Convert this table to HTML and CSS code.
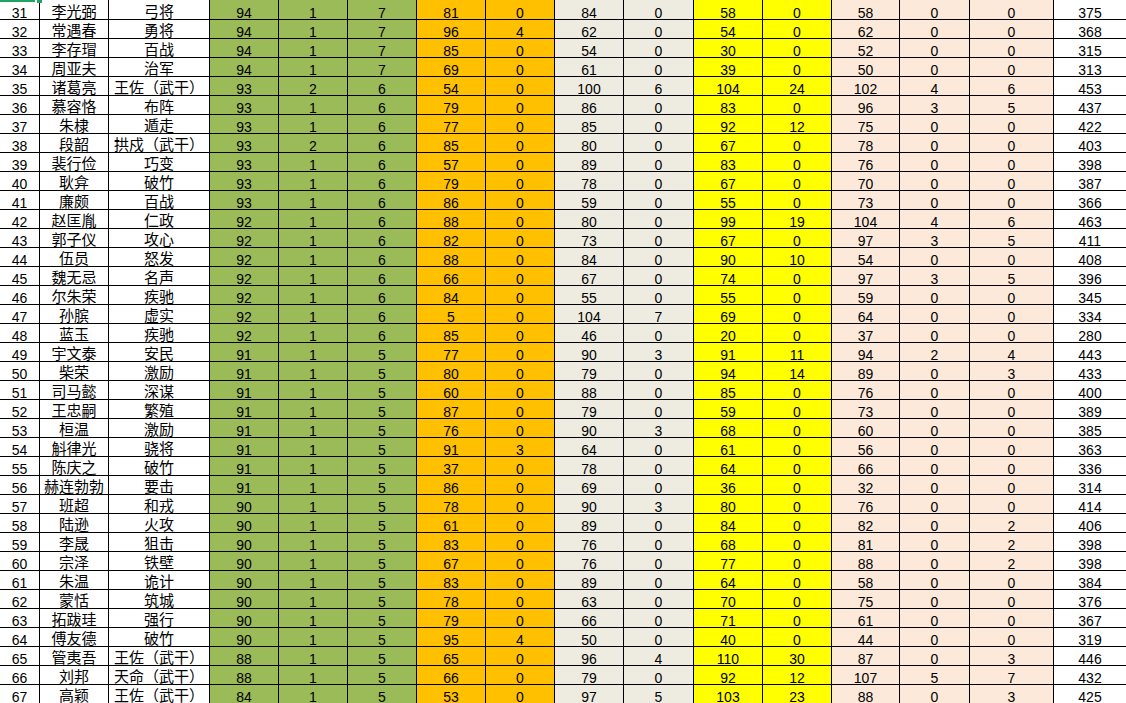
FILE: index.html
```html
<!DOCTYPE html>
<html lang="zh">
<head>
<meta charset="utf-8">
<title>武将</title>
<link rel="stylesheet" href="styles.css">
</head>
<body>
<div class="sheet">
<div class="row"><span>31</span><span>李光弼</span><span>弓将</span><span>94</span><span>1</span><span>7</span><span>81</span><span>0</span><span>84</span><span>0</span><span>58</span><span>0</span><span>58</span><span>0</span><span>0</span><span>375</span></div>
<div class="row"><span>32</span><span>常遇春</span><span>勇将</span><span>94</span><span>1</span><span>7</span><span>96</span><span>4</span><span>62</span><span>0</span><span>54</span><span>0</span><span>62</span><span>0</span><span>0</span><span>368</span></div>
<div class="row"><span>33</span><span>李存瑁</span><span>百战</span><span>94</span><span>1</span><span>7</span><span>85</span><span>0</span><span>54</span><span>0</span><span>30</span><span>0</span><span>52</span><span>0</span><span>0</span><span>315</span></div>
<div class="row"><span>34</span><span>周亚夫</span><span>治军</span><span>94</span><span>1</span><span>7</span><span>69</span><span>0</span><span>61</span><span>0</span><span>39</span><span>0</span><span>50</span><span>0</span><span>0</span><span>313</span></div>
<div class="row"><span>35</span><span>诸葛亮</span><span>王佐（武干）</span><span>93</span><span>2</span><span>6</span><span>54</span><span>0</span><span>100</span><span>6</span><span>104</span><span>24</span><span>102</span><span>4</span><span>6</span><span>453</span></div>
<div class="row"><span>36</span><span>慕容恪</span><span>布阵</span><span>93</span><span>1</span><span>6</span><span>79</span><span>0</span><span>86</span><span>0</span><span>83</span><span>0</span><span>96</span><span>3</span><span>5</span><span>437</span></div>
<div class="row"><span>37</span><span>朱棣</span><span>遁走</span><span>93</span><span>1</span><span>6</span><span>77</span><span>0</span><span>85</span><span>0</span><span>92</span><span>12</span><span>75</span><span>0</span><span>0</span><span>422</span></div>
<div class="row"><span>38</span><span>段韶</span><span>拱戍（武干）</span><span>93</span><span>2</span><span>6</span><span>85</span><span>0</span><span>80</span><span>0</span><span>67</span><span>0</span><span>78</span><span>0</span><span>0</span><span>403</span></div>
<div class="row"><span>39</span><span>裴行俭</span><span>巧变</span><span>93</span><span>1</span><span>6</span><span>57</span><span>0</span><span>89</span><span>0</span><span>83</span><span>0</span><span>76</span><span>0</span><span>0</span><span>398</span></div>
<div class="row"><span>40</span><span>耿弇</span><span>破竹</span><span>93</span><span>1</span><span>6</span><span>79</span><span>0</span><span>78</span><span>0</span><span>67</span><span>0</span><span>70</span><span>0</span><span>0</span><span>387</span></div>
<div class="row"><span>41</span><span>廉颇</span><span>百战</span><span>93</span><span>1</span><span>6</span><span>86</span><span>0</span><span>59</span><span>0</span><span>55</span><span>0</span><span>73</span><span>0</span><span>0</span><span>366</span></div>
<div class="row"><span>42</span><span>赵匡胤</span><span>仁政</span><span>92</span><span>1</span><span>6</span><span>88</span><span>0</span><span>80</span><span>0</span><span>99</span><span>19</span><span>104</span><span>4</span><span>6</span><span>463</span></div>
<div class="row"><span>43</span><span>郭子仪</span><span>攻心</span><span>92</span><span>1</span><span>6</span><span>82</span><span>0</span><span>73</span><span>0</span><span>67</span><span>0</span><span>97</span><span>3</span><span>5</span><span>411</span></div>
<div class="row"><span>44</span><span>伍员</span><span>怒发</span><span>92</span><span>1</span><span>6</span><span>88</span><span>0</span><span>84</span><span>0</span><span>90</span><span>10</span><span>54</span><span>0</span><span>0</span><span>408</span></div>
<div class="row"><span>45</span><span>魏无忌</span><span>名声</span><span>92</span><span>1</span><span>6</span><span>66</span><span>0</span><span>67</span><span>0</span><span>74</span><span>0</span><span>97</span><span>3</span><span>5</span><span>396</span></div>
<div class="row"><span>46</span><span>尔朱荣</span><span>疾驰</span><span>92</span><span>1</span><span>6</span><span>84</span><span>0</span><span>55</span><span>0</span><span>55</span><span>0</span><span>59</span><span>0</span><span>0</span><span>345</span></div>
<div class="row"><span>47</span><span>孙膑</span><span>虚实</span><span>92</span><span>1</span><span>6</span><span>5</span><span>0</span><span>104</span><span>7</span><span>69</span><span>0</span><span>64</span><span>0</span><span>0</span><span>334</span></div>
<div class="row"><span>48</span><span>蓝玉</span><span>疾驰</span><span>92</span><span>1</span><span>6</span><span>85</span><span>0</span><span>46</span><span>0</span><span>20</span><span>0</span><span>37</span><span>0</span><span>0</span><span>280</span></div>
<div class="row"><span>49</span><span>宇文泰</span><span>安民</span><span>91</span><span>1</span><span>5</span><span>77</span><span>0</span><span>90</span><span>3</span><span>91</span><span>11</span><span>94</span><span>2</span><span>4</span><span>443</span></div>
<div class="row"><span>50</span><span>柴荣</span><span>激励</span><span>91</span><span>1</span><span>5</span><span>80</span><span>0</span><span>79</span><span>0</span><span>94</span><span>14</span><span>89</span><span>0</span><span>3</span><span>433</span></div>
<div class="row"><span>51</span><span>司马懿</span><span>深谋</span><span>91</span><span>1</span><span>5</span><span>60</span><span>0</span><span>88</span><span>0</span><span>85</span><span>0</span><span>76</span><span>0</span><span>0</span><span>400</span></div>
<div class="row"><span>52</span><span>王忠嗣</span><span>繁殖</span><span>91</span><span>1</span><span>5</span><span>87</span><span>0</span><span>79</span><span>0</span><span>59</span><span>0</span><span>73</span><span>0</span><span>0</span><span>389</span></div>
<div class="row"><span>53</span><span>桓温</span><span>激励</span><span>91</span><span>1</span><span>5</span><span>76</span><span>0</span><span>90</span><span>3</span><span>68</span><span>0</span><span>60</span><span>0</span><span>0</span><span>385</span></div>
<div class="row"><span>54</span><span>斛律光</span><span>骁将</span><span>91</span><span>1</span><span>5</span><span>91</span><span>3</span><span>64</span><span>0</span><span>61</span><span>0</span><span>56</span><span>0</span><span>0</span><span>363</span></div>
<div class="row"><span>55</span><span>陈庆之</span><span>破竹</span><span>91</span><span>1</span><span>5</span><span>37</span><span>0</span><span>78</span><span>0</span><span>64</span><span>0</span><span>66</span><span>0</span><span>0</span><span>336</span></div>
<div class="row"><span>56</span><span>赫连勃勃</span><span>要击</span><span>91</span><span>1</span><span>5</span><span>86</span><span>0</span><span>69</span><span>0</span><span>36</span><span>0</span><span>32</span><span>0</span><span>0</span><span>314</span></div>
<div class="row"><span>57</span><span>班超</span><span>和戎</span><span>90</span><span>1</span><span>5</span><span>78</span><span>0</span><span>90</span><span>3</span><span>80</span><span>0</span><span>76</span><span>0</span><span>0</span><span>414</span></div>
<div class="row"><span>58</span><span>陆逊</span><span>火攻</span><span>90</span><span>1</span><span>5</span><span>61</span><span>0</span><span>89</span><span>0</span><span>84</span><span>0</span><span>82</span><span>0</span><span>2</span><span>406</span></div>
<div class="row"><span>59</span><span>李晟</span><span>狙击</span><span>90</span><span>1</span><span>5</span><span>83</span><span>0</span><span>76</span><span>0</span><span>68</span><span>0</span><span>81</span><span>0</span><span>2</span><span>398</span></div>
<div class="row"><span>60</span><span>宗泽</span><span>铁壁</span><span>90</span><span>1</span><span>5</span><span>67</span><span>0</span><span>76</span><span>0</span><span>77</span><span>0</span><span>88</span><span>0</span><span>2</span><span>398</span></div>
<div class="row"><span>61</span><span>朱温</span><span>诡计</span><span>90</span><span>1</span><span>5</span><span>83</span><span>0</span><span>89</span><span>0</span><span>64</span><span>0</span><span>58</span><span>0</span><span>0</span><span>384</span></div>
<div class="row"><span>62</span><span>蒙恬</span><span>筑城</span><span>90</span><span>1</span><span>5</span><span>78</span><span>0</span><span>63</span><span>0</span><span>70</span><span>0</span><span>75</span><span>0</span><span>0</span><span>376</span></div>
<div class="row"><span>63</span><span>拓跋珪</span><span>强行</span><span>90</span><span>1</span><span>5</span><span>79</span><span>0</span><span>66</span><span>0</span><span>71</span><span>0</span><span>61</span><span>0</span><span>0</span><span>367</span></div>
<div class="row"><span>64</span><span>傅友德</span><span>破竹</span><span>90</span><span>1</span><span>5</span><span>95</span><span>4</span><span>50</span><span>0</span><span>40</span><span>0</span><span>44</span><span>0</span><span>0</span><span>319</span></div>
<div class="row"><span>65</span><span>管夷吾</span><span>王佐（武干）</span><span>88</span><span>1</span><span>5</span><span>65</span><span>0</span><span>96</span><span>4</span><span>110</span><span>30</span><span>87</span><span>0</span><span>3</span><span>446</span></div>
<div class="row"><span>66</span><span>刘邦</span><span>天命（武干）</span><span>88</span><span>1</span><span>5</span><span>66</span><span>0</span><span>79</span><span>0</span><span>92</span><span>12</span><span>107</span><span>5</span><span>7</span><span>432</span></div>
<div class="row"><span>67</span><span>高颖</span><span>王佐（武干）</span><span>84</span><span>1</span><span>5</span><span>53</span><span>0</span><span>97</span><span>5</span><span>103</span><span>23</span><span>88</span><span>0</span><span>3</span><span>425</span></div>
<div class="selection"></div>
</div>
</body>
</html>
```

FILE: styles.css
```css
html, body {
  margin: 0;
  padding: 0;
  background: #ffffff;
}

body {
  font-family: "Liberation Sans", "Noto Sans CJK SC", sans-serif;
  color: #000000;
}

.sheet {
  position: relative;
  width: 1126px;
  height: 703px;
  overflow: hidden;
  display: flex;
  flex-direction: column;
  row-gap: 1px;
  background: #000000;
}

.row {
  display: grid;
  grid-template-columns: 39px 68px 100px 68px 68px 68px 68px 68px 68px 69px 68px 68px 67px 69px 83px 1fr;
  column-gap: 1px;
  height: 18px;
  flex: 0 0 auto;
}

.row:first-child {
  height: 19px;
}

.row > span {
  display: flex;
  align-items: flex-end;
  justify-content: center;
  background: #ffffff;
  font-size: 14px;
  line-height: 12px;
  white-space: nowrap;
}

.row > span:nth-child(2),
.row > span:nth-child(3) {
  font-family: "Noto Sans CJK SC", sans-serif;
  font-size: 15px;
  line-height: 17px;
}

.row > span:nth-child(n+4):nth-child(-n+6) {
  background: #9bbb59;
}

.row > span:nth-child(7),
.row > span:nth-child(8) {
  background: #ffc000;
}

.row > span:nth-child(9),
.row > span:nth-child(10) {
  background: #eeece1;
}

.row > span:nth-child(11),
.row > span:nth-child(12) {
  background: #ffff00;
}

.row > span:nth-child(n+13):nth-child(-n+15) {
  background: #fde9d9;
}

.selection {
  position: absolute;
  top: 0;
  left: 0;
  width: 35px;
  height: 2px;
  background: #21a366;
}

.selection::after {
  content: "";
  position: absolute;
  top: 0;
  left: 37px;
  width: 5px;
  height: 3px;
  background: #21a366;
}
```
